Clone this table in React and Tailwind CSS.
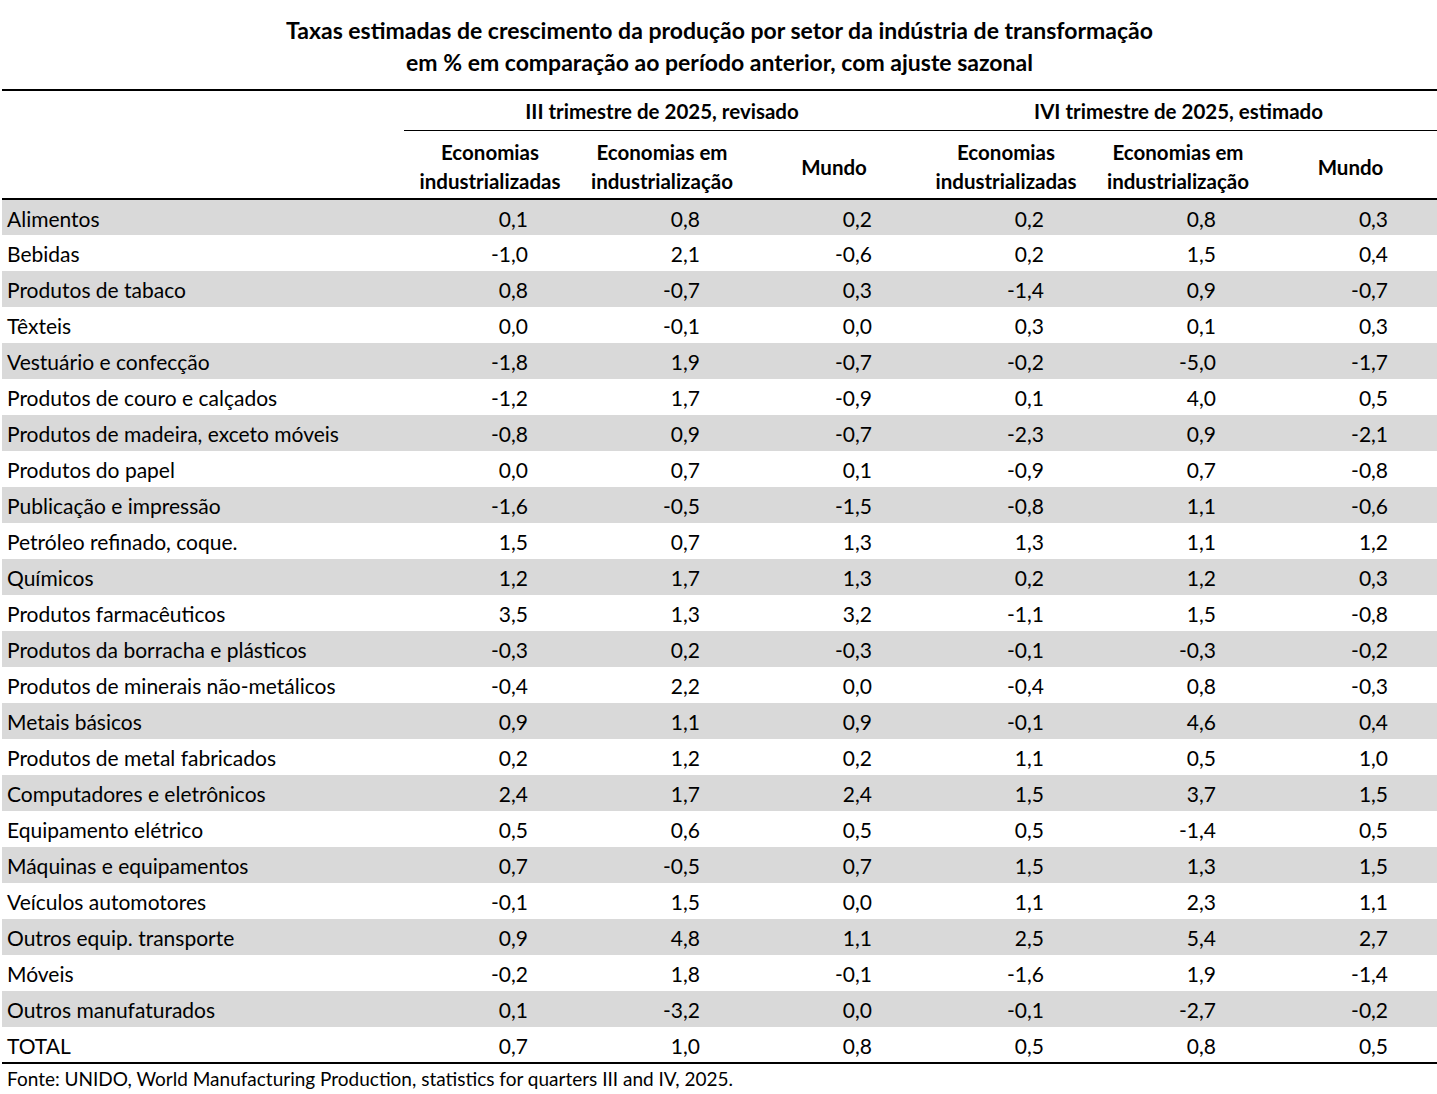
const rows = [
  ["Alimentos", "0,1", "0,8", "0,2", "0,2", "0,8", "0,3"],
  ["Bebidas", "-1,0", "2,1", "-0,6", "0,2", "1,5", "0,4"],
  ["Produtos de tabaco", "0,8", "-0,7", "0,3", "-1,4", "0,9", "-0,7"],
  ["Têxteis", "0,0", "-0,1", "0,0", "0,3", "0,1", "0,3"],
  ["Vestuário e confecção", "-1,8", "1,9", "-0,7", "-0,2", "-5,0", "-1,7"],
  ["Produtos de couro e calçados", "-1,2", "1,7", "-0,9", "0,1", "4,0", "0,5"],
  ["Produtos de madeira, exceto móveis", "-0,8", "0,9", "-0,7", "-2,3", "0,9", "-2,1"],
  ["Produtos do papel", "0,0", "0,7", "0,1", "-0,9", "0,7", "-0,8"],
  ["Publicação e impressão", "-1,6", "-0,5", "-1,5", "-0,8", "1,1", "-0,6"],
  ["Petróleo refinado, coque.", "1,5", "0,7", "1,3", "1,3", "1,1", "1,2"],
  ["Químicos", "1,2", "1,7", "1,3", "0,2", "1,2", "0,3"],
  ["Produtos farmacêuticos", "3,5", "1,3", "3,2", "-1,1", "1,5", "-0,8"],
  ["Produtos da borracha e plásticos", "-0,3", "0,2", "-0,3", "-0,1", "-0,3", "-0,2"],
  ["Produtos de minerais não-metálicos", "-0,4", "2,2", "0,0", "-0,4", "0,8", "-0,3"],
  ["Metais básicos", "0,9", "1,1", "0,9", "-0,1", "4,6", "0,4"],
  ["Produtos de metal fabricados", "0,2", "1,2", "0,2", "1,1", "0,5", "1,0"],
  ["Computadores e eletrônicos", "2,4", "1,7", "2,4", "1,5", "3,7", "1,5"],
  ["Equipamento elétrico", "0,5", "0,6", "0,5", "0,5", "-1,4", "0,5"],
  ["Máquinas e equipamentos", "0,7", "-0,5", "0,7", "1,5", "1,3", "1,5"],
  ["Veículos automotores", "-0,1", "1,5", "0,0", "1,1", "2,3", "1,1"],
  ["Outros equip. transporte", "0,9", "4,8", "1,1", "2,5", "5,4", "2,7"],
  ["Móveis", "-0,2", "1,8", "-0,1", "-1,6", "1,9", "-1,4"],
  ["Outros manufaturados", "0,1", "-3,2", "0,0", "-0,1", "-2,7", "-0,2"],
  ["TOTAL", "0,7", "1,0", "0,8", "0,5", "0,8", "0,5"],
];

const subHeads = [
  ["Economias", "industrializadas"],
  ["Economias em", "industrialização"],
  ["Mundo"],
  ["Economias", "industrializadas"],
  ["Economias em", "industrialização"],
  ["Mundo"],
];

export default function App() {
  return (
    <div className="bg-white text-black pl-[2px] w-[1437px] font-['Lato','Noto_Sans',sans-serif] text-[21px]">
      {/* Title */}
      <div className="pt-[14px] pb-[11px] text-center font-bold text-[23px] leading-[32px]">
        <div>Taxas estimadas de crescimento da produção por setor da indústria de transformação</div>
        <div>em % em comparação ao período anterior, com ajuste sazonal</div>
      </div>

      <table className="w-[1435px] border-collapse table-fixed">
        <colgroup>
          <col className="w-[402px]" />
          <col className="w-[172px]" />
          <col className="w-[172px]" />
          <col className="w-[172px]" />
          <col className="w-[172px]" />
          <col className="w-[172px]" />
          <col className="w-[173px]" />
        </colgroup>
        <thead className="font-bold text-[20.5px]">
          <tr className="border-t-2 border-black h-[40px]">
            <th></th>
            <th colSpan={3} className="text-center font-bold pt-[2px] border-b border-black">
              III trimestre de 2025, revisado
            </th>
            <th colSpan={3} className="text-center font-bold pt-[2px] border-b border-black">
              IVI trimestre de 2025, estimado
            </th>
          </tr>
          <tr className="border-b-2 border-black h-[69px]">
            <th></th>
            {subHeads.map((h, i) => (
              <th key={i} className="text-center font-bold pt-[6px] leading-[29px]">
                {h.map((l, j) => (
                  <div key={j}>{l}</div>
                ))}
              </th>
            ))}
          </tr>
        </thead>
        <tbody>
          {rows.map((r, i) => (
            <tr
              key={r[0]}
              className={`h-[36px] ${i % 2 === 0 ? "bg-[#d9d9d9]" : "bg-white"} ${
                i === rows.length - 1 ? "border-b-2 border-black" : ""
              }`}
            >
              <td className="pl-[5px] pt-[2px] whitespace-nowrap">{r[0]}</td>
              {r.slice(1).map((v, j) => (
                <td key={j} className={`text-right pt-[2px] ${j === 5 ? "pr-[49px]" : "pr-[48px]"}`}>
                  {v}
                </td>
              ))}
            </tr>
          ))}
        </tbody>
      </table>

      <div className="pl-[5px] pt-[1px] text-[19px] leading-[28px]">
        Fonte: UNIDO, World Manufacturing Production, statistics for quarters III and IV, 2025.
      </div>
    </div>
  );
}
